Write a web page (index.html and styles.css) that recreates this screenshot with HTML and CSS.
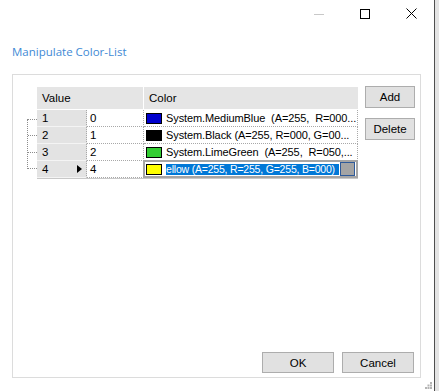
FILE: index.html
```html
<!DOCTYPE html>
<html lang="en">

<head>
    <meta charset="UTF-8">
    <title>Manipulate Color-List</title>
    <link rel="stylesheet" href="styles.css">
</head>

<body>
    <div class="window">
        <div class="titlebar">
            <span class="caption-btn">
                <svg width="10" height="10" viewBox="0 0 10 10"><path d="M0 5.5H10" stroke="#c8c8c8" stroke-width="1"/></svg>
            </span>
            <span class="caption-btn">
                <svg width="10" height="10" viewBox="0 0 10 10"><rect x="0.5" y="0.5" width="9" height="9" fill="none" stroke="#000" stroke-width="1"/></svg>
            </span>
            <span class="caption-btn">
                <svg width="11" height="11" viewBox="0 0 11 11"><path d="M0.5 0.5L10.5 10.5M10.5 0.5L0.5 10.5" stroke="#000" stroke-width="1"/></svg>
            </span>
        </div>

        <div class="heading">Manipulate Color-List</div>

        <div class="panel">
            <div class="top">
                <div class="tree">
                    <span></span>
                    <span></span>
                    <span></span>
                    <span></span>
                </div>

                <div class="grid">
                    <div class="hd hd-value">Value</div>
                    <div class="hd">Color</div>

                    <div class="rh">1</div>
                    <div class="cell">0</div>
                    <div class="cell color"><span class="swatch" style="background:#0000cd"></span><span class="txt">System.MediumBlue  (A=255,  R=000...</span></div>

                    <div class="rh">2</div>
                    <div class="cell">1</div>
                    <div class="cell color"><span class="swatch" style="background:#000000"></span><span class="txt">System.Black (A=255, R=000, G=00...</span></div>

                    <div class="rh">3</div>
                    <div class="cell">2</div>
                    <div class="cell color"><span class="swatch" style="background:#32cd32"></span><span class="txt">System.LimeGreen  (A=255,  R=050,...</span></div>

                    <div class="rh current">4<span class="arrow"></span></div>
                    <div class="cell">4</div>
                    <div class="cell color editing">
                        <span class="swatch" style="background:#ffff00"></span>
                        <span class="sel">ellow (A=255, R=255, G=255, B=000)</span>
                        <span class="drop"></span>
                    </div>
                </div>

                <div class="side">
                    <button class="btn small">Add</button>
                    <button class="btn small">Delete</button>
                </div>
            </div>

            <div class="bottom">
                <button class="btn wide">OK</button>
                <button class="btn wide">Cancel</button>
            </div>
        </div>

        <div class="footer">
            <svg width="7" height="7" viewBox="0 0 7 7" fill="#b4b4b4">
                <rect x="5" y="0" width="2" height="2"/>
                <rect x="2.5" y="2.5" width="2" height="2"/>
                <rect x="5" y="2.5" width="2" height="2"/>
                <rect x="0" y="5" width="2" height="2"/>
                <rect x="2.5" y="5" width="2" height="2"/>
                <rect x="5" y="5" width="2" height="2"/>
            </svg>
        </div>
    </div>
    <div class="outside"></div>
</body>

</html>
```

FILE: styles.css
```css
body {
    margin: 0;
    display: flex;
    height: 391px;
    background-color: #fff;
    font-family: 'Liberation Sans', Arial, sans-serif;
    font-size: 11px;
    color: #000;
}

.window {
    width: 434px;
    border-right: 1px solid #4f4f4f;
    display: flex;
    flex-direction: column;
}

.outside {
    flex: 1;
    background-color: #e4e4e4;
}

/* barra de titulo */
.titlebar {
    height: 27px;
    display: flex;
    justify-content: flex-end;
}

.caption-btn {
    width: 46px;
    display: flex;
    justify-content: center;
    align-items: center;
}

.heading {
    margin-top: 17px;
    padding-left: 12px;
    height: 30px;
    font-family: 'Open Sans', 'Liberation Sans', sans-serif;
    font-size: 11.5px;
    color: #3f8ad5;
}

.panel {
    margin-left: 12px;
    width: 409px;
    height: 304px;
    box-sizing: border-box;
    border: 1px solid #dcdcdc;
    display: flex;
    flex-direction: column;
}

.top {
    display: flex;
    align-items: flex-start;
    padding-top: 11px;
}

.tree {
    margin-left: 14px;
    margin-top: 33px;
    width: 10px;
    height: 50px;
    box-sizing: border-box;
    border-left: 1px dotted #8c8c8c;
    display: flex;
    flex-direction: column;
    justify-content: space-between;
}

.tree span {
    height: 0;
    border-top: 1px dotted #8c8c8c;
}

/* tabla */
.grid {
    margin-top: 1px;
    display: grid;
    grid-template-columns: 50px 57px 214px;
    grid-template-rows: 23px repeat(4, 17px);
    border-bottom: 1px solid #c8c8c8;
}

.hd {
    background-color: #e5e5e5;
    border-bottom: 1px solid #fff;
    display: flex;
    align-items: center;
    padding-left: 5px;
    font-size: 11.5px;
}

.hd-value {
    grid-column: span 2;
    border-right: 1px solid #fff;
}

.rh {
    background-color: #e3e3e3;
    border-bottom: 1px solid #f4f4f4;
    border-right: 1px dotted #a8a8a8;
    display: flex;
    align-items: center;
    justify-content: space-between;
    padding: 0 4px 0 5px;
    font-size: 11.5px;
}

.arrow {
    width: 0;
    height: 0;
    border-left: 5px solid #000;
    border-top: 4px solid transparent;
    border-bottom: 4px solid transparent;
}

.cell {
    border-bottom: 1px dotted #a8a8a8;
    border-right: 1px dotted #a8a8a8;
    display: flex;
    align-items: center;
    padding-left: 3px;
    white-space: nowrap;
    overflow: hidden;
    font-size: 11.5px;
}

.color {
    padding-left: 2px;
    font-size: 11px;
}

.swatch {
    flex: none;
    width: 14px;
    height: 9px;
    border: 1px solid #000;
    margin-right: 4px;
}

.txt {
    white-space: pre;
    letter-spacing: -0.1px;
}

.editing {
    margin-left: -1px;
    margin-top: -1px;
    border: 2px solid #a5a5a5;
    padding-left: 1px;
}

.sel {
    background-color: #0078d7;
    color: #fff;
    font-size: 10.5px;
    line-height: 11px;
    flex: 1;
    letter-spacing: -0.2px;
    white-space: nowrap;
}

.drop {
    flex: none;
    width: 13px;
    height: 12px;
    margin: 0 1px 0 1px;
    background-color: #a4a4a4;
    border: 1px solid #2e5a9a;
}

/* botones */
.side {
    margin-left: 7px;
    display: flex;
    flex-direction: column;
    gap: 10px;
}

.btn {
    font-family: 'Liberation Sans', Arial, sans-serif;
    font-size: 11.5px;
    color: #000;
    background-color: #e1e1e1;
    border: 1px solid #adadad;
    padding: 0;
}

.small {
    width: 50px;
    height: 22px;
}

.wide {
    width: 72px;
    height: 21px;
}

.bottom {
    margin-top: auto;
    display: flex;
    justify-content: flex-end;
    gap: 8px;
    padding: 0 6px 4px 0;
}

.footer {
    flex: 1;
    display: flex;
    justify-content: flex-end;
    align-items: flex-end;
    padding: 0 2px 2px 0;
}
```
